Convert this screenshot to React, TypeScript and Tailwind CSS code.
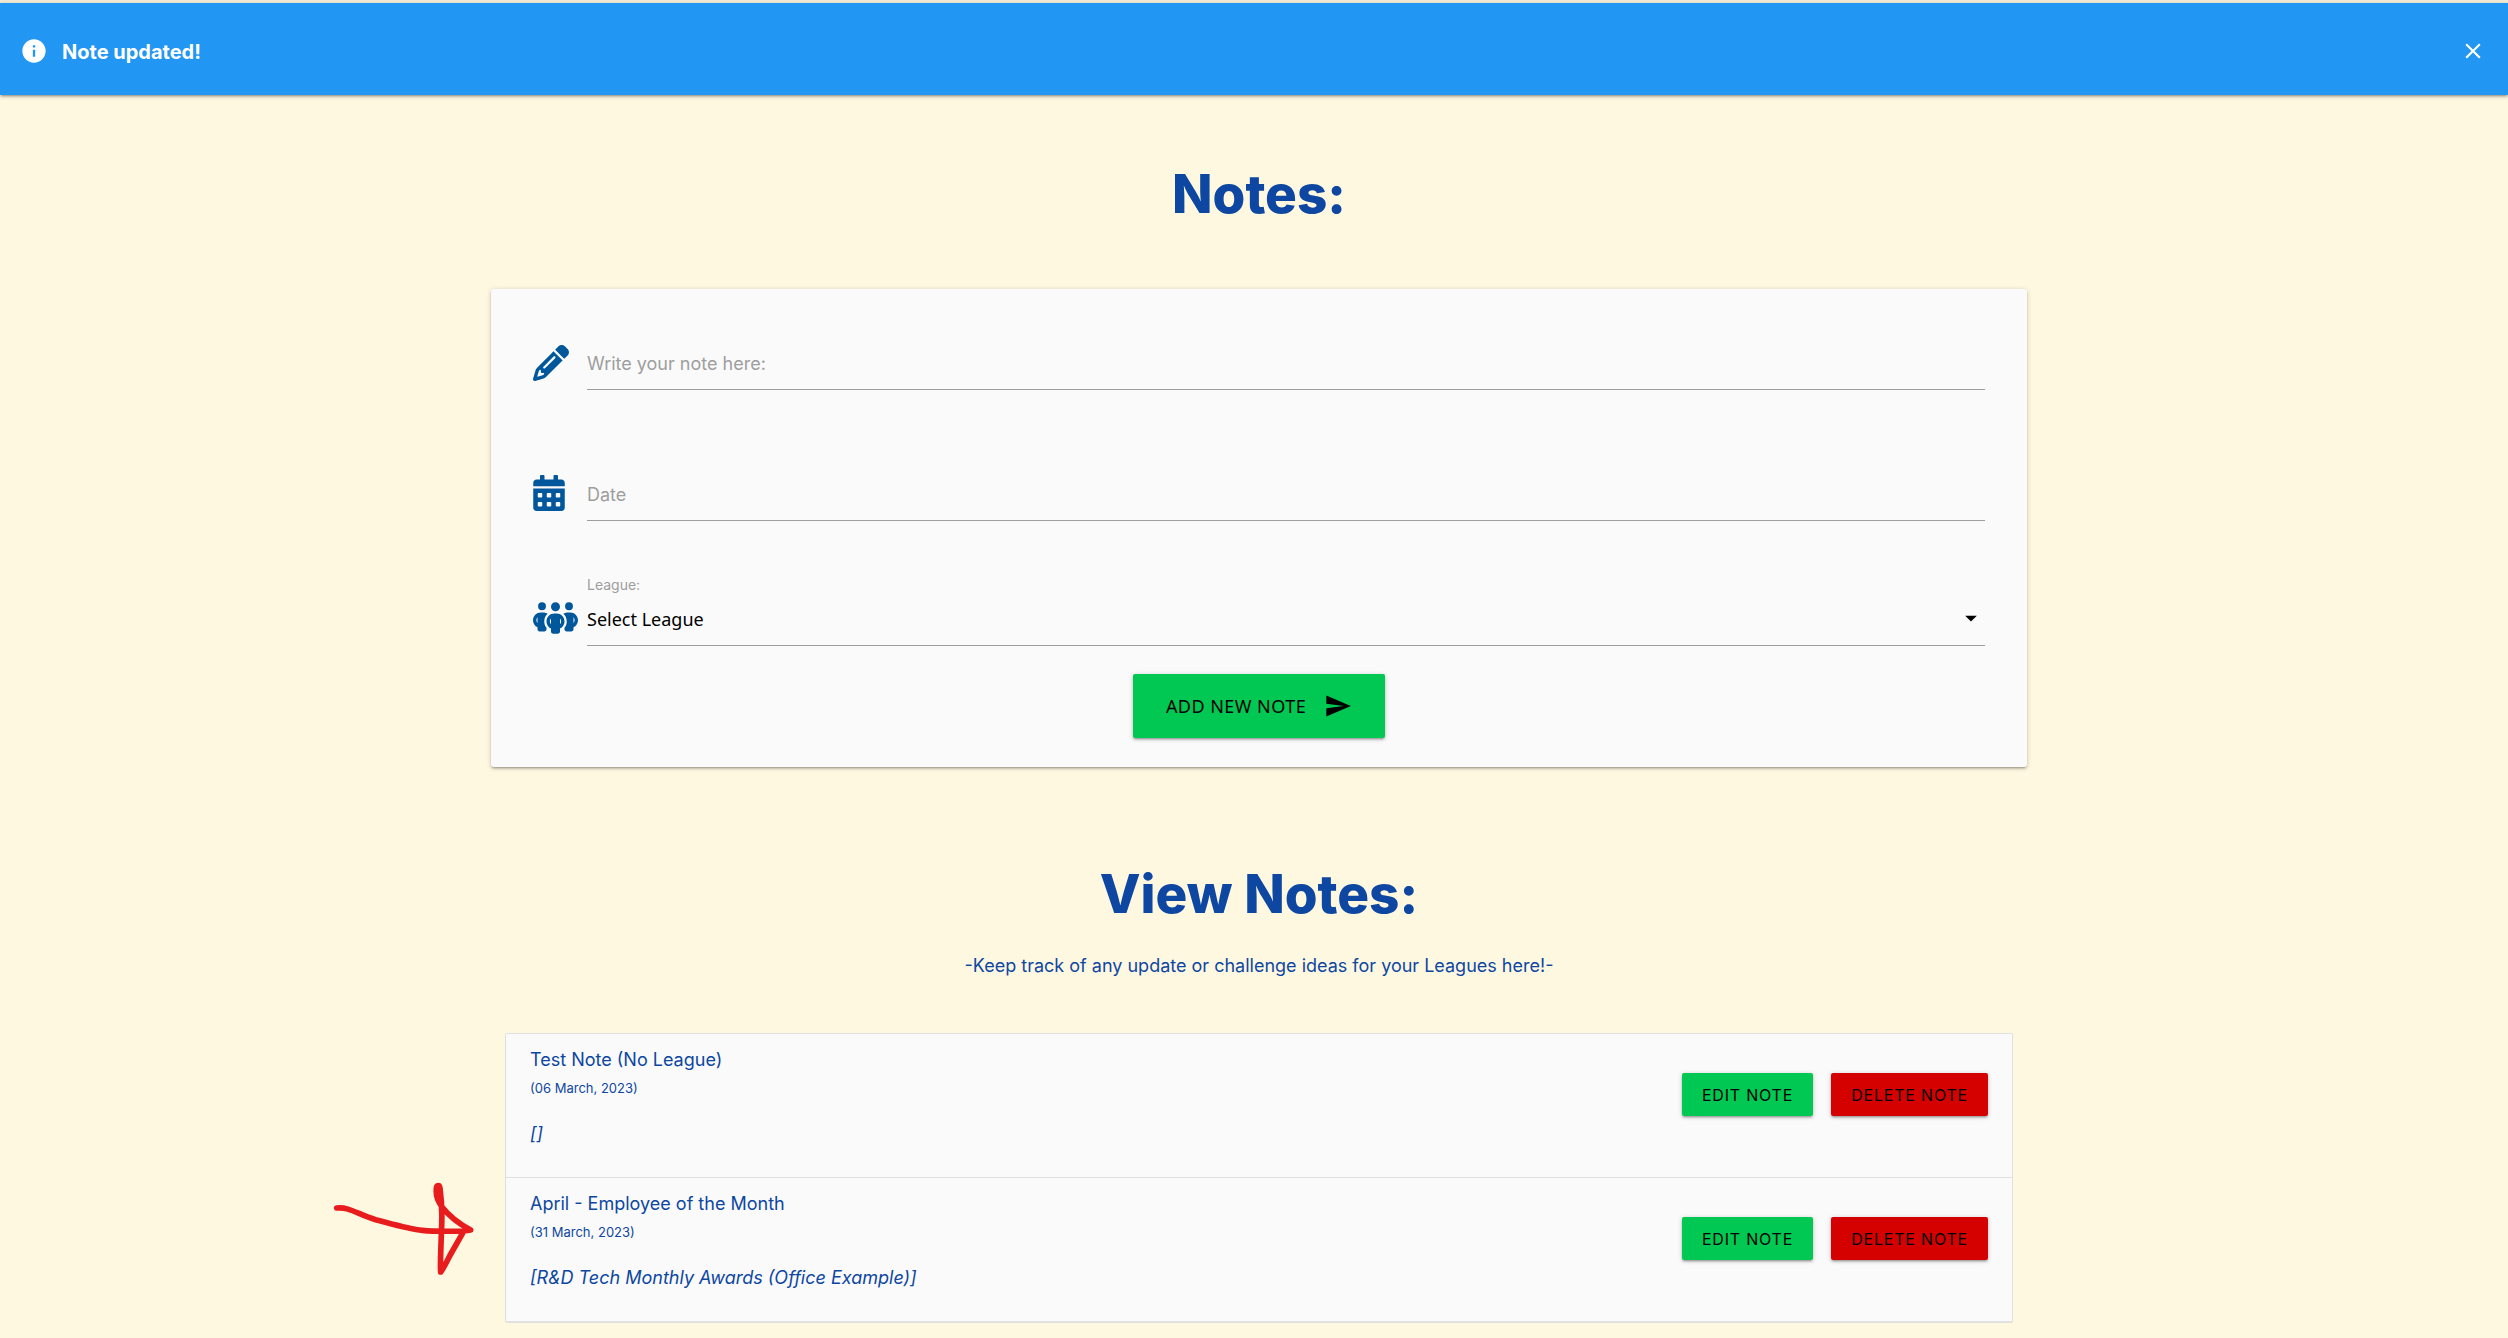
import React from "react";
import { FaCalendarAlt } from "react-icons/fa";
import { FaPencil, FaPeopleGroup } from "react-icons/fa6";
import { MdArrowDropDown, MdClose, MdInfo, MdSend } from "react-icons/md";

const raised =
  "shadow-[0_2px_2px_0_rgba(0,0,0,0.14),0_3px_1px_-2px_rgba(0,0,0,0.12),0_1px_5px_0_rgba(0,0,0,0.2)]";

const notes = [
  { title: "Test Note (No League)", date: "(06 March, 2023)", league: "[]", marked: false },
  {
    title: "April - Employee of the Month",
    date: "(31 March, 2023)",
    league: "[R&D Tech Monthly Awards (Office Example)]",
    marked: true,
  },
];

function Banner() {
  return (
    <div className="bg-[#f3ecd8] pt-[3px]">
      <div role="status" className={`flex h-[92px] items-center bg-[#2196f3] px-5 pt-1 text-white ${raised}`}>
        <MdInfo className="size-7" aria-hidden="true" />
        <p className="ml-3.5 flex-1 pt-0.5 text-[20px] leading-7 font-bold">Note updated!</p>
        <button type="button" aria-label="Close" className="mr-0.5">
          <MdClose className="size-[26px]" />
        </button>
      </div>
    </div>
  );
}

function HandArrow() {
  return (
    <svg
      className="absolute top-0.5 right-full mr-[30px] h-24 w-36"
      viewBox="39 30 432 288"
      fill="none"
      stroke="#e81c1c"
      strokeWidth="17"
      strokeLinecap="round"
      strokeLinejoin="round"
      aria-hidden="true"
    >
      <path d="M53 114 C92 110 118 134 170 149 C220 162 270 177 310 181 C350 185 400 184 434 183 L455 180 C425 164 390 138 369 111 C358 96 350 76 352 57 C352 44 362 44 363 56 C368 90 370 140 367 190 C366 240 363 275 365 306 C374 296 385 270 397 249 L434 184" />
      <path d="M357 50 L361 90" strokeWidth="22" />
    </svg>
  );
}

const field = "w-full border-b border-[#9e9e9e] bg-transparent text-[18px] outline-none";

function TextField({ id, label }: { id: string; label: string }) {
  return (
    <div className="relative min-w-0 flex-1">
      <label
        htmlFor={id}
        className="absolute top-[23px] left-0 cursor-text text-[18px] leading-7 text-[#9e9e9e]"
      >
        {label}
      </label>
      <input id={id} type="text" className={`${field} block h-[63px]`} />
    </div>
  );
}

function NoteForm() {
  return (
    <form
      className={`mt-[63px] flex flex-col rounded-[3px] bg-[#fafafa] px-[42px] pt-[38px] pb-[29px] ${raised}`}
      onSubmit={(e) => e.preventDefault()}
    >
      <div className="flex items-center">
        <div className="w-[54px] shrink-0 pt-2 text-[#01579b]">
          <FaPencil className="size-9" aria-hidden="true" />
        </div>
        <TextField id="note" label="Write your note here:" />
      </div>
      <div className="mt-[68px] flex items-center">
        <div className="w-[54px] shrink-0 pt-1.5 text-[#01579b]">
          <FaCalendarAlt className="h-9 w-8" aria-hidden="true" />
        </div>
        <TextField id="date" label="Date" />
      </div>
      <div className="mt-[54px] flex items-end">
        <div className="w-[54px] shrink-0 pb-2.5 text-[#01579b]">
          <FaPeopleGroup className="h-9 w-[45px]" aria-hidden="true" />
        </div>
        <div className="relative min-w-0 flex-1">
          <label htmlFor="league" className="block text-[14px] leading-5 text-[#9e9e9e]">League:</label>
          <select
            id="league"
            className={`${field} block h-[51px] appearance-none pb-0.5 font-['Noto_Sans',sans-serif] text-black`}
          >
            <option>Select League</option>
          </select>
          <MdArrowDropDown className="pointer-events-none absolute right-0 bottom-3.5 size-7 text-black" aria-hidden="true" />
        </div>
      </div>
      <button
        type="submit"
        className={`mt-7 flex h-16 items-center gap-[18px] self-center rounded-[2px] bg-[#00c853] px-[33px] font-['Noto_Sans',sans-serif] text-[18px] tracking-wide text-black uppercase ${raised}`}
      >
        Add new note
        <MdSend className="size-7" aria-hidden="true" />
      </button>
    </form>
  );
}

function NoteList() {
  const button = `h-[43px] rounded-[2px] px-5 text-[16px] tracking-wider text-black uppercase ${raised}`;
  return (
    <ul className="mx-3.5 mt-[53px] rounded-[2px] border border-b-2 border-[#e0e0e0] bg-[#fafafa]">
      {notes.map((note) => (
        <li
          key={note.title}
          className="relative flex h-36 items-start justify-between border-b border-[#e0e0e0] px-6 pt-3 last:h-[143px] last:border-b-0"
        >
          {note.marked && <HandArrow />}
          <div>
            <p className="text-[18px] leading-7">{note.title}</p>
            <p className="text-[13px] leading-7">{note.date}</p>
            <p className="mt-[18px] text-[18px] leading-7 italic">{note.league}</p>
          </div>
          <div className="mt-[27px] flex gap-[18px]">
            <button type="button" className={`${button} bg-[#00c853]`}>Edit note</button>
            <button type="button" className={`${button} bg-[#d50000]`}>Delete note</button>
          </div>
        </li>
      ))}
    </ul>
  );
}

export default function App() {
  return (
    <div className="min-h-screen bg-[#fff8e1] font-[Inter,sans-serif] text-[#0d47a1]">
      <Banner />
      <div className="pb-3.5 pl-2.5">
        <main className="mx-auto max-w-[1536px] pt-[67px]">
          <h1 className="text-center text-[53px] leading-[64px] font-extrabold">Notes:</h1>
          <NoteForm />
          <h2 className="mt-[95px] text-center text-[53px] leading-[64px] font-extrabold">View Notes:</h2>
          <p className="mt-[26px] text-center text-[18px] leading-7">
            -Keep track of any update or challenge ideas for your Leagues here!-
          </p>
          <NoteList />
        </main>
      </div>
    </div>
  );
}
